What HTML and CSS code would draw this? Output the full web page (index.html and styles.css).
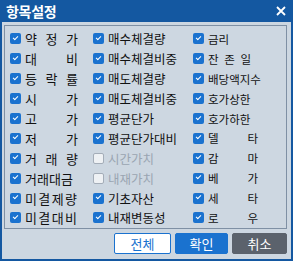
FILE: index.html
```html
<html><head><meta charset="UTF-8"><meta name="viewport" content="width=device-width, initial-scale=1.0"><title>항목설정</title>
<link rel="stylesheet" href="styles.css">
</head>
<body>
<div class="dialog">
    <div class="titlebar">
        <span class="title">항목설정</span>
        <svg class="close" width="10" height="10" viewBox="0 0 10 10"><path d="M1 1L9 9M9 1L1 9" stroke="#fff" stroke-width="1.8"/></svg>
    </div>
    <div class="panel">
        <label class="item c1"><span class="box on"></span><span class="spread">약 정 가</span></label>
        <label class="item c2"><span class="box on"></span>매수체결량</label>
        <label class="item c3"><span class="box on"></span>금리</label>

        <label class="item c1"><span class="box on"></span><span class="spread">대 비</span></label>
        <label class="item c2"><span class="box on"></span>매수체결비중</label>
        <label class="item c3"><span class="box on"></span><span class="spread short">잔 존 일</span></label>

        <label class="item c1"><span class="box on"></span><span class="spread">등 락 률</span></label>
        <label class="item c2"><span class="box on"></span>매도체결량</label>
        <label class="item c3"><span class="box on"></span>배당액지수</label>

        <label class="item c1"><span class="box on"></span><span class="spread">시 가</span></label>
        <label class="item c2"><span class="box on"></span>매도체결비중</label>
        <label class="item c3"><span class="box on"></span>호가상한</label>

        <label class="item c1"><span class="box on"></span><span class="spread">고 가</span></label>
        <label class="item c2"><span class="box on"></span>평균단가</label>
        <label class="item c3"><span class="box on"></span>호가하한</label>

        <label class="item c1"><span class="box on"></span><span class="spread">저 가</span></label>
        <label class="item c2"><span class="box on"></span>평균단가대비</label>
        <label class="item c3"><span class="box on"></span><span class="spread">델 타</span></label>

        <label class="item c1"><span class="box on"></span><span class="spread">거 래 량</span></label>
        <label class="item c2 off"><span class="box"></span>시간가치</label>
        <label class="item c3"><span class="box on"></span><span class="spread">감 마</span></label>

        <label class="item c1"><span class="box on"></span>거래대금</label>
        <label class="item c2 off"><span class="box"></span>내재가치</label>
        <label class="item c3"><span class="box on"></span><span class="spread">베 가</span></label>

        <label class="item c1"><span class="box on"></span><span class="loose">미결제량</span></label>
        <label class="item c2"><span class="box on"></span>기초자산</label>
        <label class="item c3"><span class="box on"></span><span class="spread">세 타</span></label>

        <label class="item c1"><span class="box on"></span><span class="loose">미결대비</span></label>
        <label class="item c2"><span class="box on"></span>내재변동성</label>
        <label class="item c3"><span class="box on"></span><span class="spread">로 우</span></label>
    </div>
    <div class="actions">
        <button class="btn all">전체</button>
        <button class="btn ok">확인</button>
        <button class="btn cancel">취소</button>
    </div>
</div>
</body></html>
```
FILE: styles.css
```css
body {
    margin: 0;
    font-family: "Noto Sans CJK KR", "Noto Sans", sans-serif;
    background-color: #cdd7e1;
}

.dialog {
    width: 293px;
    height: 261px;
    box-sizing: border-box;
    border: 2px solid #1458a1;
    border-top: none;
    background-color: #cdd7e1;
    display: flex;
    flex-direction: column;
}

.titlebar {
    height: 22px;
    margin: 0 -2px;
    padding: 0 7px 0 6px;
    background-color: #1458a1;
    display: flex;
    align-items: center;
    justify-content: space-between;
}

.title {
    color: #fff;
    font-size: 14px;
    font-weight: bold;
    letter-spacing: -0.3px;
}

.close {
    margin-top: -1px;
}

.panel {
    margin: 3px 4px 0 2px;
    height: 204px;
    box-sizing: border-box;
    border: 1px solid #7f90a4;
    padding: 3px 0 0 5px;
    display: grid;
    grid-template-columns: 83px 100px 1fr;
    grid-auto-rows: 19.9px;
}

.item {
    display: flex;
    align-items: center;
    gap: 4px;
    color: #111;
    white-space: nowrap;
}

.c1 {
    font-size: 13px;
}

.c2 {
    font-size: 12.5px;
}

.c3 {
    font-size: 11.5px;
}

.off {
    color: #9aa5b1;
}

.box {
    width: 11px;
    height: 11px;
    box-sizing: border-box;
    border-radius: 2px;
    border: 1px solid #a4adb8;
    background-color: #eef1f4;
    flex: none;
}

.box.on {
    border: none;
    background-color: #1a72cf;
    position: relative;
}

.box.on::after {
    content: '';
    position: absolute;
    left: 3px;
    top: 2.5px;
    width: 4px;
    height: 2px;
    border-left: 1.5px solid #fff;
    border-bottom: 1.5px solid #fff;
    transform: rotate(-45deg);
}

.spread {
    display: inline-block;
    width: 53px;
    text-align: justify;
    text-align-last: justify;
}

.loose {
    letter-spacing: 1.4px;
}

.c3 .spread {
    width: 50px;
}

.c3 .spread.short {
    width: 43px;
}

.actions {
    margin: 4px 4px 0 0;
    display: flex;
    justify-content: flex-end;
    gap: 4px;
}

.btn {
    width: 55px;
    height: 21px;
    padding: 0;
    font-family: inherit;
    font-size: 13px;
    border-radius: 2px;
    border: 1px solid #1a72cf;
    cursor: pointer;
}

.btn.all {
    width: 57px;
    background-color: #fff;
    color: #1a72cf;
}

.btn.ok {
    width: 53px;
    background-color: #1a72cf;
    color: #fff;
}

.btn.cancel {
    background-color: #5b626c;
    border-color: #5b626c;
    color: #fff;
}
```
